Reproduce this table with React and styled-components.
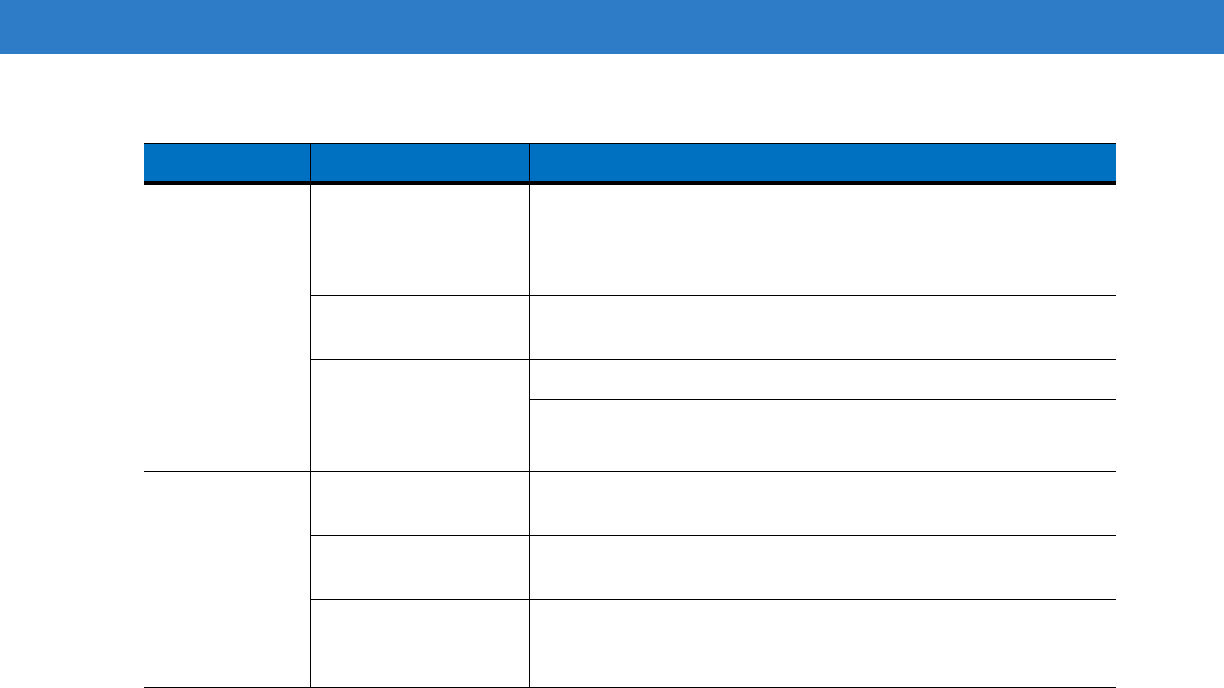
import React from 'react';
import styled, {createGlobalStyle} from 'styled-components'

const GlobalStyle = createGlobalStyle`
    html, body{
        margin: 0;
        padding: 0;
        background: white;
        font-family: "Liberation Sans", Arial, sans-serif;
    }
`

const TopBar = styled.header`
    height: 54px;
    background-color: #2e7bc8;
`

const Page = styled.main`
    padding: 89px 0 0 144px;
`

const Table = styled.table`
    width: 972px;
    table-layout: fixed;
    border-collapse: separate;
    border-spacing: 0;
    border-top: 1px solid black;
    font-size: 13px;
    color: black;
`

const HeadCell = styled.th`
    box-sizing: border-box;
    height: 41px;
    padding: 0 8px;
    background-color: #0070c0;
    color: white;
    text-align: left;
    border-bottom: 4px solid black;
    border-left: ${props => props.first ? 'none' : '1px solid black'};
`

const Cell = styled.td`
    box-sizing: border-box;
    padding: 4px 8px;
    vertical-align: top;
    border-bottom: 1px solid black;
    border-left: ${props => props.first ? 'none' : '1px solid black'};
`

// row heights including the 1px rule underneath
const rows = [111, 64, 40, 72, 64, 64, 88]

const App = () => {
    return(
        <>
        <GlobalStyle/>
        <TopBar/>
        <Page>
            <Table>
                <colgroup>
                    <col style={{width: 166}}/>
                    <col style={{width: 219}}/>
                    <col style={{width: 587}}/>
                </colgroup>
                <thead>
                    <tr>
                        <HeadCell first></HeadCell>
                        <HeadCell></HeadCell>
                        <HeadCell></HeadCell>
                    </tr>
                </thead>
                <tbody>
                    <tr style={{height: rows[0]}}>
                        <Cell first rowSpan={4}></Cell>
                        <Cell></Cell>
                        <Cell></Cell>
                    </tr>
                    <tr style={{height: rows[1]}}>
                        <Cell></Cell>
                        <Cell></Cell>
                    </tr>
                    <tr style={{height: rows[2]}}>
                        <Cell rowSpan={2}></Cell>
                        <Cell></Cell>
                    </tr>
                    <tr style={{height: rows[3]}}>
                        <Cell></Cell>
                    </tr>
                    <tr style={{height: rows[4]}}>
                        <Cell first rowSpan={3}></Cell>
                        <Cell></Cell>
                        <Cell></Cell>
                    </tr>
                    <tr style={{height: rows[5]}}>
                        <Cell></Cell>
                        <Cell></Cell>
                    </tr>
                    <tr style={{height: rows[6]}}>
                        <Cell></Cell>
                        <Cell></Cell>
                    </tr>
                </tbody>
            </Table>
        </Page>
        </>
    )
}

export default App
